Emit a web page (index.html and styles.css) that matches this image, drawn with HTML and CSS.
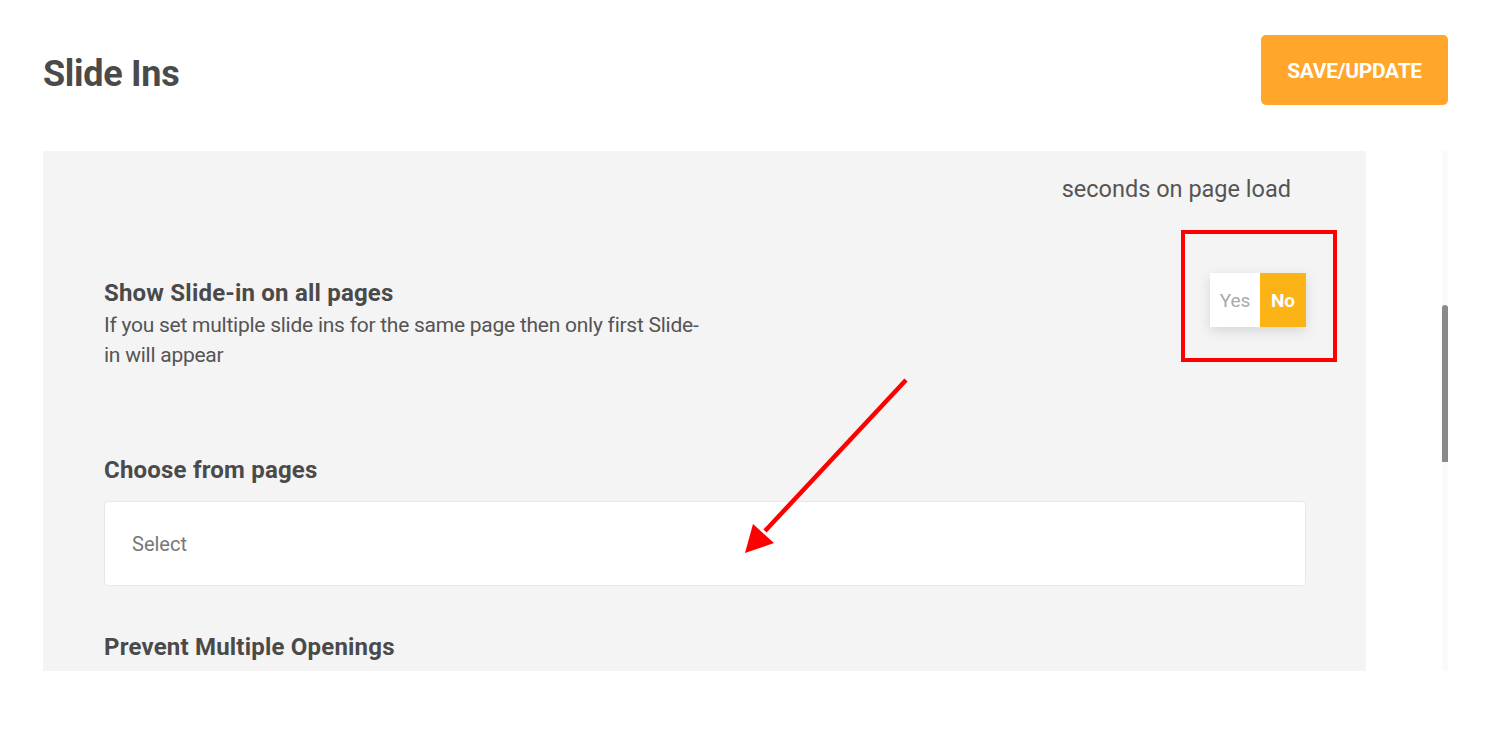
FILE: index.html
```html
<!DOCTYPE html>
<html lang="en">
<head>
<meta charset="utf-8">
<title>Slide Ins</title>
<link rel="stylesheet" href="styles.css">
</head>
<body>
<div class="page">
  <header class="topbar">
    <h1 class="title">Slide Ins</h1>
    <button class="save-btn" type="button">SAVE/UPDATE</button>
  </header>

  <div class="scroller">
    <section class="panel">
      <div class="delay-row">
        <span class="delay-text">seconds on page load</span>
      </div>

      <div class="setting-row">
        <div class="setting-info">
          <h3 class="setting-title">Show Slide-in on all pages</h3>
          <p class="setting-desc">If you set multiple slide ins for the same page then only first Slide-in will appear</p>
        </div>
        <div class="toggle-wrap">
          <div class="toggle">
            <span class="toggle-opt toggle-yes">Yes</span>
            <span class="toggle-opt toggle-no">No</span>
          </div>
          <div class="highlight-box"></div>
        </div>
      </div>

      <div class="field">
        <h3 class="setting-title">Choose from pages</h3>
        <div class="select-box">Select</div>
      </div>

      <div class="field field-last">
        <h3 class="setting-title">Prevent Multiple Openings</h3>
      </div>
    </section>

    <div class="scroll-track">
      <div class="scroll-thumb"></div>
    </div>
  </div>

  <svg class="arrow" width="1502" height="746" viewBox="0 0 1502 746" aria-hidden="true">
    <line x1="906" y1="380" x2="765" y2="531" stroke="#ff0000" stroke-width="4.5"/>
    <polygon points="745,553 753,524 774,543" fill="#ff0000"/>
  </svg>
</div>
</body>
</html>
```

FILE: styles.css
```css
* { box-sizing: border-box; }

html, body {
  margin: 0;
  padding: 0;
  background: #ffffff;
}

body {
  font-family: Roboto, "Liberation Sans", sans-serif;
  color: #4a4a4a;
}

.page {
  position: relative;
  width: 1502px;
  height: 746px;
  overflow: hidden;
}

.topbar {
  display: flex;
  justify-content: space-between;
  align-items: center;
  padding: 35px 54px 0 43px;
  height: 105px;
}

.title {
  margin: 8px 0 0;
  font-size: 36px;
  line-height: 40px;
  font-weight: 700;
  letter-spacing: -0.3px;
  color: #4a4a4a;
}

.save-btn {
  width: 187px;
  height: 70px;
  border: none;
  border-radius: 5px;
  background: #ffa62b;
  color: #ffffff;
  font-family: Roboto, "Liberation Sans", sans-serif;
  font-weight: 700;
  font-size: 21px;
  letter-spacing: -0.3px;
  padding: 2px 0 0;
}

.scroller {
  display: flex;
  justify-content: space-between;
  margin: 46px 0 0 43px;
  width: 1405px;
  height: 520px;
}

.panel {
  width: 1323px;
  height: 520px;
  background: #f4f4f4;
  padding: 23px 60px 0 61px;
  overflow: hidden;
}

.delay-row {
  display: flex;
  justify-content: flex-end;
  padding-right: 15px;
  height: 30px;
}

.delay-text {
  font-size: 23.5px;
  line-height: 30px;
  color: #555555;
}

.setting-row {
  display: flex;
  justify-content: space-between;
  align-items: flex-start;
  margin-top: 74px;
}

.setting-info {
  width: 598px;
}

.setting-title {
  margin: 0;
  font-size: 24px;
  line-height: 30px;
  font-weight: 700;
  letter-spacing: 0.2px;
  color: #4a4a4a;
}

.setting-desc {
  margin: 2px 0 0;
  font-size: 21px;
  line-height: 30px;
  color: #555555;
  letter-spacing: -0.25px;
}

.toggle-wrap {
  position: relative;
  margin-top: -5px;
}

.toggle {
  display: flex;
  height: 54px;
  box-shadow: 0 4px 12px rgba(0, 0, 0, 0.12);
}

.toggle-opt {
  display: flex;
  align-items: center;
  justify-content: center;
  font-size: 19px;
}

.toggle-yes {
  width: 50px;
  background: #ffffff;
  color: #aaaaaa;
}

.toggle-no {
  width: 46px;
  background: #fcb316;
  color: #ffffff;
  font-weight: 700;
}

.highlight-box {
  position: absolute;
  left: -29px;
  top: -43px;
  width: 156px;
  height: 132px;
  border: 4px solid #ff0000;
}

.field {
  margin-top: 85px;
}

.select-box {
  margin-top: 16px;
  height: 85px;
  background: #ffffff;
  border: 1px solid #e8e8e8;
  border-radius: 4px;
  padding: 0 27px;
  display: flex;
  align-items: center;
  font-size: 20px;
  color: #777777;
}

.field-last {
  margin-top: 46px;
}

.scroll-track {
  width: 6px;
  height: 520px;
  background: #fafafb;
}

.scroll-thumb {
  margin-top: 154px;
  height: 157px;
  width: 6px;
  background: #8a8a8a;
  border-radius: 3px 3px 0 0;
}

.arrow {
  position: absolute;
  left: 0;
  top: 0;
  pointer-events: none;
}
```
